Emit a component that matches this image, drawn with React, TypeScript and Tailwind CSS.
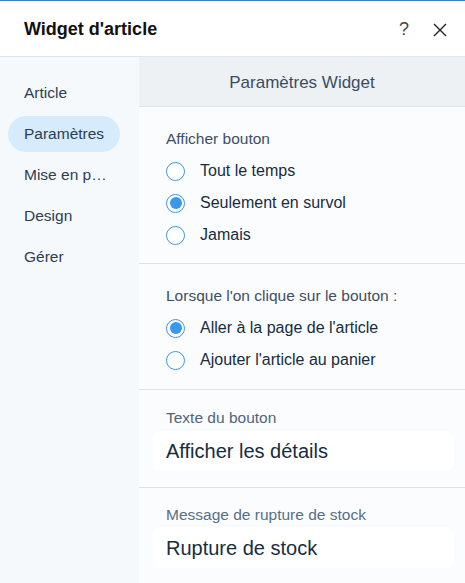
import React from "react";

const font = { fontFamily: '"Liberation Sans", Arial, sans-serif' };

function RadioRow({ checked, label }: { checked?: boolean; label: string }) {
  return (
    <div className="flex h-[32px] items-center">
      <div className="flex h-[19px] w-[19px] items-center justify-center rounded-full border-[1.5px] border-[#3899ec] bg-white">
        {checked && <div className="h-[12px] w-[12px] rounded-full bg-[#3899ec]" />}
      </div>
      <span className="ml-[15px] text-[16px] text-[#162d3d]">{label}</span>
    </div>
  );
}

export default function App() {
  const navItems = ["Article", "Paramètres", "Mise en p…", "Design", "Gérer"];
  return (
    <div style={font} className="flex h-[583px] w-[465px] flex-col overflow-hidden bg-white">
      <div className="flex h-[57px] shrink-0 items-center border-t border-b border-t-[#2f7bf5] border-b-[#dfe5eb] bg-white pl-[24px] pr-[18px] pt-[2px]">
        <span className="text-[18px] font-bold text-[#111]">Widget d'article</span>
        <div className="ml-auto flex items-center gap-[24px]">
          <span className="text-[18px] font-light text-[#444]">?</span>
          <svg width="14" height="14" viewBox="0 0 14 14">
            <path d="M1 1 L13 13 M13 1 L1 13" stroke="#222" strokeWidth="1.4" fill="none" />
          </svg>
        </div>
      </div>
      <div className="flex flex-1">
        <div className="flex w-[139px] shrink-0 flex-col gap-[5px] bg-[#f5f9fc] pl-[8px] pr-[19px] pt-[18px]">
          {navItems.map((n) => (
            <div
              key={n}
              className={`flex h-[36px] items-center rounded-full px-[16px] text-[15.5px] text-[#2e3e50] ${
                n === "Paramètres" ? "bg-[#d6ecfc]" : ""
              }`}
            >
              <span className="whitespace-nowrap">{n}</span>
            </div>
          ))}
        </div>
        <div className="flex flex-1 flex-col bg-[#fbfcfd]">
          <div className="flex h-[50px] items-center justify-center border-b border-[#dde3e9] bg-[#eef1f4] pt-[2px] text-[17px] text-[#3a4d63]">
            Paramètres Widget
          </div>
          <div className="border-b border-[#dde3e9] pb-[12px] pt-[23px]">
            <div className="pl-[27px] text-[15.5px] leading-[18px] text-[#3d4f63]">Afficher bouton</div>
            <div className="mt-[7px] flex flex-col pl-[27px]">
              <RadioRow label="Tout le temps" />
              <RadioRow label="Seulement en survol" checked />
              <RadioRow label="Jamais" />
            </div>
          </div>
          <div className="border-b border-[#dde3e9] pb-[13px] pt-[23px]">
            <div className="pl-[27px] text-[15.5px] leading-[18px] text-[#3d4f63]">Lorsque l'on clique sur le bouton :</div>
            <div className="mt-[7px] flex flex-col pl-[27px]">
              <RadioRow label="Aller à la page de l'article" checked />
              <RadioRow label="Ajouter l'article au panier" />
            </div>
          </div>
          <div className="border-b border-[#dde3e9] pb-[16px] pt-[19px]">
            <div className="pl-[27px] text-[15.5px] leading-[18px] text-[#4f6579]">Texte du bouton</div>
            <div className="ml-[14px] mr-[11px] mt-[4px] flex h-[40px] items-center rounded-[8px] bg-white pl-[13px] text-[20px] text-[#162d3d]">
              Afficher les détails
            </div>
          </div>
          <div className="pt-[18px]">
            <div className="pl-[27px] text-[15.5px] leading-[18px] text-[#577085]">Message de rupture de stock</div>
            <div className="ml-[14px] mr-[11px] mt-[3px] flex h-[41px] items-center rounded-[8px] bg-white pl-[13px] text-[20px] text-[#162d3d]">
              Rupture de stock
            </div>
          </div>
        </div>
      </div>
    </div>
  );
}
